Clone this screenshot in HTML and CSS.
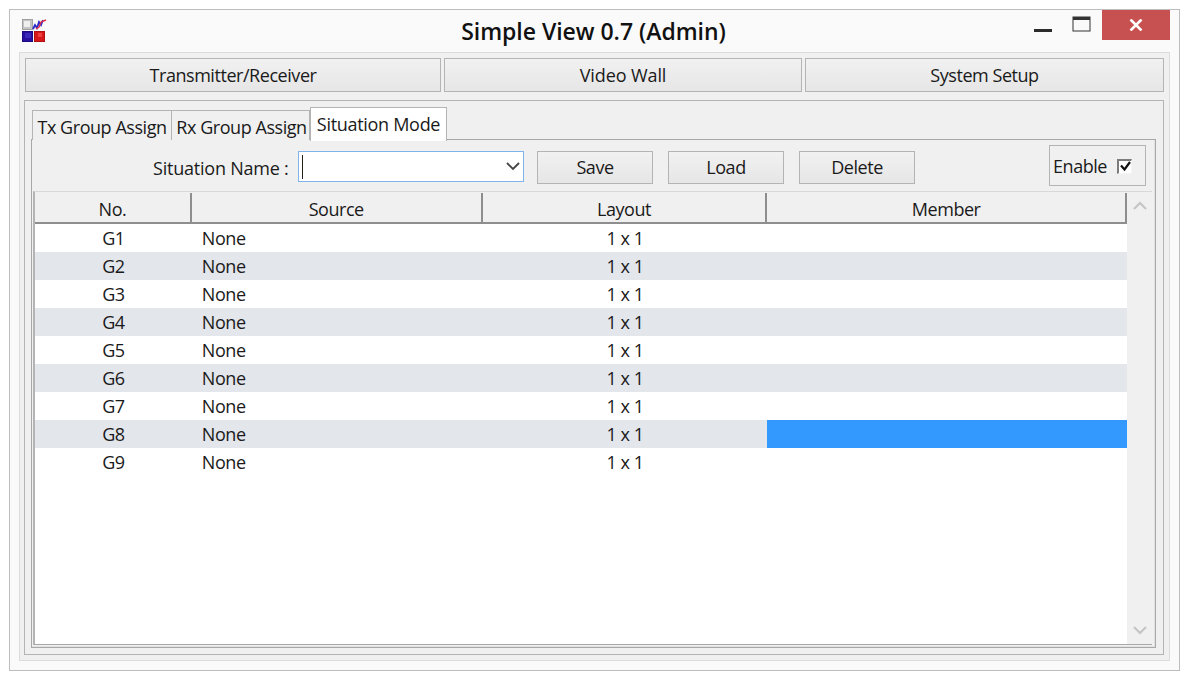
FILE: index.html
```html
<!DOCTYPE html>
<html lang="en">
<head>
<meta charset="utf-8">
<title>Simple View 0.7 (Admin)</title>
<link rel="stylesheet" href="styles.css">
</head>
<body>
<div class="window">
  <header class="titlebar">
    <div class="app-icon">
      <svg width="25" height="24" viewBox="0 0 25 24">
        <rect x="0.5" y="0.5" width="10" height="10" fill="#c4c4c4" stroke="#a0a0a0"/>
        <rect x="2" y="2" width="6" height="6" fill="#efefef"/>
        <rect x="0.5" y="12.5" width="10" height="10" fill="#2a0f9e" stroke="#1c0a80"/>
        <rect x="3" y="14" width="6" height="5" fill="#3a28b8"/>
        <rect x="12.5" y="12.5" width="10" height="10" fill="#d81818" stroke="#b01010"/>
        <rect x="16" y="14" width="4" height="4" fill="#ee4040"/>
        <path d="M11 10 L13 6 L15 9 L17 3 L19 6 L21 1" fill="none" stroke="#2a2ac8" stroke-width="1.8"/>
        <path d="M14 10 L17 8 L19 3 L24 1" fill="none" stroke="#e0344a" stroke-width="1.5"/>
      </svg>
    </div>
    <h1 class="title">Simple View 0.7 (Admin)</h1>
    <div class="controls">
      <svg class="ctl-min" width="18" height="4" viewBox="0 0 18 4"><rect width="18" height="3" fill="#2b2b2b"/></svg>
      <svg class="ctl-max" width="19" height="16" viewBox="0 0 19 16"><rect x="1" y="1" width="17" height="14" fill="none" stroke="#333"/><rect x="1" y="1" width="17" height="3" fill="#333"/></svg>
      <div class="ctl-close"><svg width="14" height="12" viewBox="0 0 14 12"><path d="M1.5 0.5 L12.5 11.5 M12.5 0.5 L1.5 11.5" stroke="#fff" stroke-width="2.6"/></svg></div>
    </div>
  </header>
  <div class="client">
    <nav class="mainnav">
      <button class="navbtn nav-tx">Transmitter/Receiver</button>
      <button class="navbtn nav-vw">Video Wall</button>
      <button class="navbtn nav-sys">System Setup</button>
    </nav>
    <section class="panel">
      <div class="tabs">
        <div class="tab tab-tx">Tx Group Assign</div>
        <div class="tab tab-rx">Rx Group Assign</div>
        <div class="tab tab-active">Situation Mode</div>
      </div>
      <div class="pane">
        <div class="toolbar">
          <span class="label">Situation Name :</span>
          <div class="combo">
            <span class="caret"></span>
            <svg width="14" height="9" viewBox="0 0 14 9"><path d="M1 1 L7 7 L13 1" fill="none" stroke="#444" stroke-width="1.8"/></svg>
          </div>
          <button class="btn btn-save">Save</button>
          <button class="btn">Load</button>
          <button class="btn">Delete</button>
          <div class="enable">
            <span>Enable</span>
            <span class="check"><svg width="11" height="11" viewBox="0 0 11 11"><path d="M1 4.5 L4.5 8.5 L10 1" fill="none" stroke="#111" stroke-width="2.2"/></svg></span>
          </div>
        </div>
        <div class="tablewrap">
          <div class="table">
            <div class="thead">
              <div class="th c1">No.</div>
              <div class="th c2">Source</div>
              <div class="th c3">Layout</div>
              <div class="th c4">Member</div>
            </div>
            <div class="row"><div class="td c1">G1</div><div class="td c2 left">None</div><div class="td c3">1 x 1</div><div class="td c4"></div></div>
            <div class="row alt"><div class="td c1">G2</div><div class="td c2 left">None</div><div class="td c3">1 x 1</div><div class="td c4"></div></div>
            <div class="row"><div class="td c1">G3</div><div class="td c2 left">None</div><div class="td c3">1 x 1</div><div class="td c4"></div></div>
            <div class="row alt"><div class="td c1">G4</div><div class="td c2 left">None</div><div class="td c3">1 x 1</div><div class="td c4"></div></div>
            <div class="row"><div class="td c1">G5</div><div class="td c2 left">None</div><div class="td c3">1 x 1</div><div class="td c4"></div></div>
            <div class="row alt"><div class="td c1">G6</div><div class="td c2 left">None</div><div class="td c3">1 x 1</div><div class="td c4"></div></div>
            <div class="row"><div class="td c1">G7</div><div class="td c2 left">None</div><div class="td c3">1 x 1</div><div class="td c4"></div></div>
            <div class="row alt"><div class="td c1">G8</div><div class="td c2 left">None</div><div class="td c3">1 x 1</div><div class="td c4 selected"></div></div>
            <div class="row"><div class="td c1">G9</div><div class="td c2 left">None</div><div class="td c3">1 x 1</div><div class="td c4"></div></div>
          </div>
          <div class="scrollbar">
            <svg width="14" height="9" viewBox="0 0 14 9"><path d="M1 8 L7 2 L13 8" fill="none" stroke="#c4c4c4" stroke-width="2"/></svg>
            <svg width="14" height="9" viewBox="0 0 14 9"><path d="M1 1 L7 7 L13 1" fill="none" stroke="#c4c4c4" stroke-width="2"/></svg>
          </div>
        </div>
      </div>
    </section>
  </div>
</div>
</body>
</html>
```

FILE: styles.css
```css
* { box-sizing: border-box; }
html, body { margin: 0; padding: 0; background: #fff; }
body {
  width: 1189px;
  height: 679px;
  overflow: hidden;
  padding: 9px 9px 8px 9px;
  font-family: "Open Sans", "Noto Sans", sans-serif;
  font-size: 18px;
  letter-spacing: -0.45px;
  color: #1a1a1a;
}
.window {
  width: 1171px;
  height: 662px;
  border: 1px solid #bdbdbd;
  background: #fafafa;
  display: flex;
  flex-direction: column;
  padding: 0 9px 9px 9px;
}
.titlebar {
  height: 42px;
  flex: none;
  display: grid;
  grid-template-columns: 1fr auto 1fr;
  align-items: start;
}
.app-icon { padding: 9px 0 0 3px; height: 33px; }
.app-icon svg { display: block; }
.title {
  margin: 0 2px 0 0;
  padding-top: 7px;
  font-size: 23px;
  font-weight: 600;
  letter-spacing: -0.03px;
  line-height: 28px;
  color: #111;
}
.controls {
  display: flex;
  justify-content: flex-end;
  align-items: flex-start;
}
.ctl-min { margin-top: 19px; margin-right: 20px; }
.ctl-max { margin-top: 6px; margin-right: 11px; }
.ctl-close {
  width: 68px;
  height: 30px;
  background: #c75050;
  display: flex;
  align-items: center;
  justify-content: center;
}
.client {
  flex: 1;
  background: #f0f0f0;
  border: 1px solid #dcdcdc;
  padding: 5px 5px 5px 4px;
  display: flex;
  flex-direction: column;
  min-height: 0;
}
.mainnav {
  display: flex;
  gap: 3px;
  height: 34px;
  flex: none;
  padding-left: 1px;
}
button {
  font: inherit;
  letter-spacing: inherit;
  color: inherit;
  padding: 0;
}
.navbtn, .btn {
  background: linear-gradient(#f1f1f1, #e6e6e6);
  border: 1px solid #b4b4b4;
}
.nav-tx { width: 416px; }
.nav-vw { width: 358px; letter-spacing: -0.1px; }
.nav-sys { width: 359px; }
.panel {
  margin-top: 8px;
  flex: 1;
  border: 1px solid #b4b4b4;
  padding: 5px 7px 6px 6px;
  display: flex;
  flex-direction: column;
  min-height: 0;
  background: #f0f0f0;
}
.tabs {
  display: flex;
  align-items: flex-end;
  height: 34px;
  flex: none;
  padding-left: 1px;
  position: relative;
  z-index: 1;
  margin-bottom: -1px;
}
.tab {
  height: 30px;
  border: 1px solid #b4b4b4;
  border-bottom: 0;
  background: #f0f0f0;
  line-height: 32px;
  text-align: center;
  white-space: nowrap;
}
.tab-tx { width: 140px; }
.tab-rx { width: 138px; border-left: 0; padding-left: 2px; }
.tab-active {
  width: 137px;
  height: 34px;
  background: #fff;
  line-height: 33px;
  letter-spacing: -0.3px;
  margin-bottom: -1px;
  padding-bottom: 6px;
}
.pane {
  flex: 1;
  min-height: 0;
  border: 1px solid #a8a8a8;
  box-shadow: inset -1px -1px 0 #e2e2e2;
  padding: 0 3px 2px 1px;
  display: flex;
  flex-direction: column;
}
.toolbar {
  height: 51px;
  flex: none;
  display: flex;
  align-items: center;
  position: relative;
}
.label {
  margin-left: 120px;
  width: 138px;
  padding: 4px 4px 0 0;
  text-align: right;
  white-space: nowrap;
  letter-spacing: -0.22px;
}
.combo {
  width: 226px;
  height: 31px;
  margin-left: 7px;
  margin-top: 2px;
  background: #fff;
  border: 1px solid #7eb4ea;
  display: flex;
  align-items: center;
  justify-content: space-between;
  padding: 0 3px 0 3px;
}
.caret { width: 1px; height: 24px; background: #222; }
.btn { width: 116px; height: 33px; margin-left: 15px; margin-top: 3px; }
.btn-save { margin-left: 13px; }
.enable {
  margin-left: auto;
  margin-right: 6px;
  width: 97px;
  height: 41px;
  border: 1px solid #b4b4b4;
  display: flex;
  align-items: center;
  padding-left: 3px;
  padding-top: 1px;
  gap: 10px;
}
.check {
  width: 15px;
  height: 15px;
  flex: none;
  border: 1px solid #f5f5f5;
  border-top: 2px solid #7c7c7c;
  border-left: 2px solid #7c7c7c;
  background: #fff;
  display: flex;
  align-items: center;
  justify-content: center;
}
.tablewrap {
  flex: 1;
  min-height: 0;
  display: flex;
  background: #fff;
  border-style: solid;
  border-width: 1px 0 1px 2px;
  border-color: #d8d8d8 #b4b4b4 #a8a8a8 #b4b4b4;
}
.table { flex: 1; min-width: 0; }
.thead {
  display: flex;
  height: 32px;
  padding-top: 1px;
  background: #f0f0f0;
  border-bottom: 2px solid #8e8e8e;
}
.th {
  line-height: 32px;
  text-align: center;
  border-right: 2px solid #8e8e8e;
}
.c1 { width: 157px; }
.c2 { width: 291px; }
.c3 { width: 285px; }
.c4 { width: 360px; }
.row { display: flex; height: 28px; line-height: 28px; }
.row.alt { background: #e3e6eb; }
.td { text-align: center; }
.td.left { text-align: left; padding-left: 10px; }
.td.selected { background: #3399ff; }
.scrollbar {
  width: 25px;
  background: #f0f0f0;
  display: flex;
  flex-direction: column;
  justify-content: space-between;
  align-items: center;
  padding: 9px 0 9px 0;
}
```
